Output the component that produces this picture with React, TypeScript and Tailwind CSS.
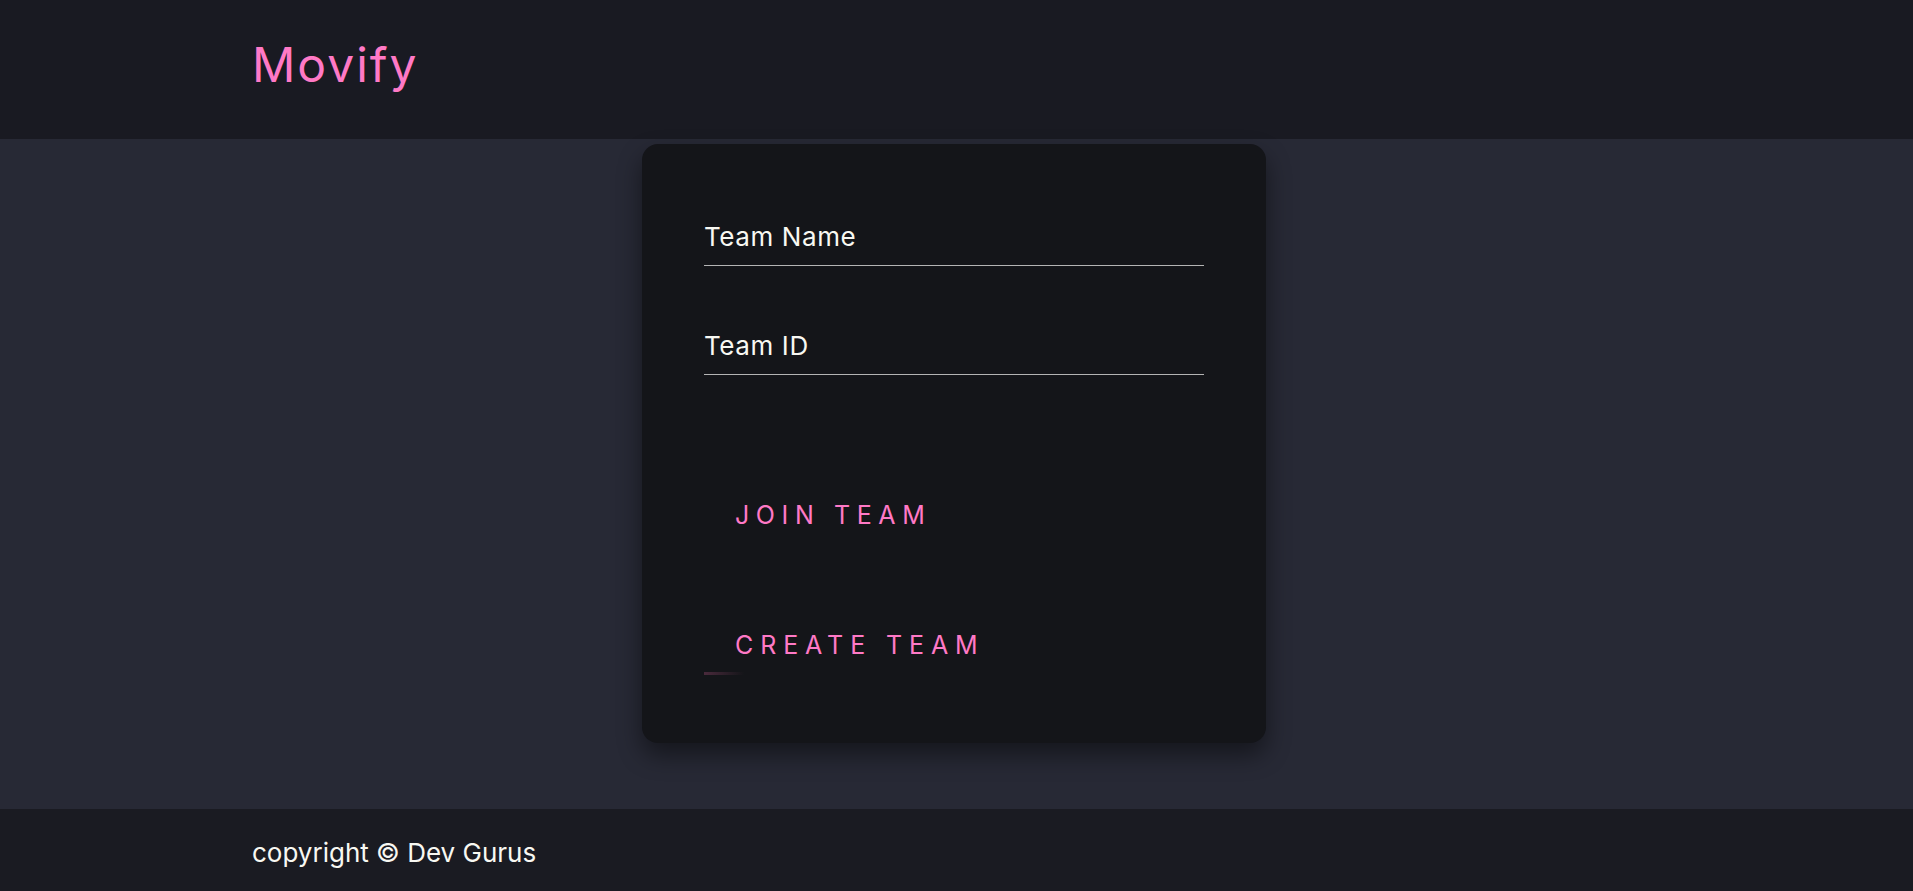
import React from "react";

const font = { fontFamily: "Inter, 'Noto Sans', sans-serif" };

function Field({ label, className }: { label: string; className?: string }) {
  return (
    <div className={className}>
      <div className="text-[26px] leading-[30px] tracking-[0.6px] text-[#f8f8f2]">{label}</div>
      <div className="mt-[13px] h-px w-full bg-[#b4b4b4]" />
    </div>
  );
}

export default function App() {
  return (
    <div className="flex min-h-screen flex-col bg-[#272935]" style={font}>
      <header className="h-[139px] bg-[#191a22] px-[252px] pt-[41px]">
        <div className="text-[48px] leading-[48px] tracking-[2px] text-[#ff79c6]">Movify</div>
      </header>
      <main className="flex flex-1 justify-center pr-[5px]">
        <div className="mt-[5px] mb-[66px] h-[599px] w-[624px] rounded-[16px] bg-[#141519] px-[62px] pt-[78px] shadow-[0_12px_24px_rgba(0,0,0,0.45)]">
          <Field label="Team Name" />
          <Field label="Team ID" className="mt-[65px]" />
          <div className="mt-[125px] pl-[31px] text-[25px] leading-[30px] tracking-[6.6px] text-[#ff79c6]">JOIN TEAM</div>
          <div className="mt-[100px] pl-[31px] text-[25px] leading-[30px] tracking-[6.9px] text-[#ff79c6]">CREATE TEAM</div>
          <div className="mt-[12px] h-[3px] w-[40px] bg-gradient-to-r from-[#4a2a3c] to-transparent" />
        </div>
      </main>
      <footer className="h-[83px] bg-[#1a1b22] px-[252px] pt-[29px]">
        <div className="text-[26px] leading-[30px] text-[#f8f8f2]">copyright © Dev Gurus</div>
      </footer>
    </div>
  );
}
